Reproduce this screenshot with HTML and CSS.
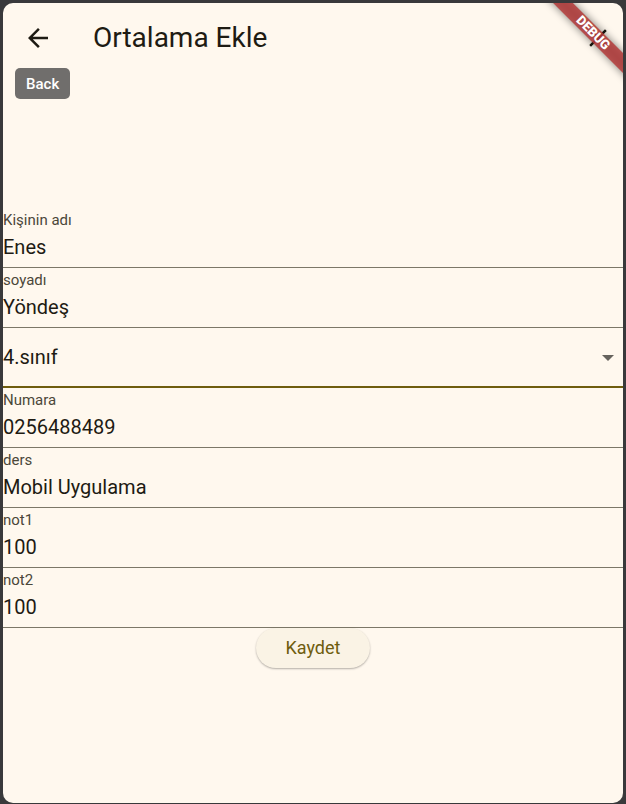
FILE: index.html
```html
<!DOCTYPE html>
<html lang="tr">
<head>
<meta charset="utf-8">
<meta name="viewport" content="width=device-width, initial-scale=1">
<title>Ortalama Ekle</title>
<link rel="stylesheet" href="styles.css">
</head>
<body>
<div class="window">
  <header class="appbar">
    <button class="icon-button" type="button" aria-label="Back">
      <svg class="icon" viewBox="0 0 24 24"><path d="M20 11H7.83l5.59-5.59L12 4l-8 8 8 8 1.41-1.41L7.83 13H20v-2z"/></svg>
    </button>
    <span class="tooltip">Back</span>
    <h1 class="title">Ortalama Ekle</h1>
    <button class="icon-button" type="button" aria-label="Kapat">
      <svg class="icon" viewBox="0 0 24 24"><path d="M19 6.41L17.59 5 12 10.59 6.41 5 5 6.41 10.59 12 5 17.59 6.41 19 12 13.41 17.59 19 19 17.59 13.41 12z"/></svg>
    </button>
  </header>
  <form class="form">
    <div class="field">
      <label class="label" for="ad">Kişinin adı</label>
      <input class="input" id="ad" type="text" value="Enes">
    </div>
    <div class="field">
      <label class="label" for="soyad">soyadı</label>
      <input class="input" id="soyad" type="text" value="Yöndeş">
    </div>
    <div class="field field-select">
      <select class="select" id="sinif" aria-label="Sınıf">
        <option>4.sınıf</option>
      </select>
      <svg class="caret" viewBox="0 0 12 6"><path d="M0 0h12L6 6z"/></svg>
    </div>
    <div class="field">
      <label class="label" for="numara">Numara</label>
      <input class="input" id="numara" type="text" value="0256488489">
    </div>
    <div class="field">
      <label class="label" for="ders">ders</label>
      <input class="input" id="ders" type="text" value="Mobil Uygulama">
    </div>
    <div class="field">
      <label class="label" for="not1">not1</label>
      <input class="input" id="not1" type="text" value="100">
    </div>
    <div class="field">
      <label class="label" for="not2">not2</label>
      <input class="input" id="not2" type="text" value="100">
    </div>
    <button class="save" type="button">Kaydet</button>
  </form>
  <div class="ribbon">DEBUG</div>
</div>
</body>
</html>
```
FILE: styles.css
```css
* {
  box-sizing: border-box;
}

body {
  margin: 0;
  padding: 3px 3px 1px;
  min-height: 100vh;
  display: flex;
  background: #39393b;
  font-family: Roboto, "Liberation Sans", sans-serif;
  color: #1e1b13;
}

.window {
  position: relative;
  flex: 1;
  display: flex;
  flex-direction: column;
  overflow: hidden;
  border-radius: 10px;
  background: #fff8ee;
}

.appbar {
  position: relative;
  display: flex;
  align-items: center;
  height: 70px;
  padding: 0 5px;
}

.icon-button {
  display: grid;
  place-items: center;
  width: 60px;
  height: 60px;
  padding: 0;
  border: 0;
  background: none;
  color: inherit;
}

.appbar .icon-button:last-child {
  width: 40px;
}

.icon {
  width: 30px;
  height: 30px;
  fill: currentColor;
}

.title {
  flex: 1;
  margin: 0 0 0 25px;
  font-size: 28px;
  line-height: 36px;
  font-weight: 400;
}

.tooltip {
  position: absolute;
  left: 12px;
  top: 65px;
  padding: 1px 11px 0;
  border-radius: 5px;
  background: #706e6c;
  color: #fff;
  font-size: 15px;
  line-height: 30px;
  font-weight: 500;
}

.form {
  flex: 1;
  display: flex;
  flex-direction: column;
  justify-content: center;
}

.field {
  display: flex;
  flex-direction: column;
  height: 60px;
  padding-top: 2px;
  border-bottom: 1px solid #7c7767;
}

.label {
  color: #4b4739;
  font-size: 15px;
  line-height: 20px;
}

.input,
.select {
  width: 100%;
  padding: 0;
  border: 0;
  outline: 0;
  background: none;
  color: inherit;
  font-family: inherit;
  font-size: 20px;
}

.input {
  height: 34px;
}

.field-select {
  position: relative;
  padding: 0;
  border-bottom: 2px solid #6f5d0e;
}

.select {
  flex: 1;
  appearance: none;
}

.caret {
  position: absolute;
  right: 9px;
  top: 27px;
  width: 12px;
  height: 6px;
  fill: #66635d;
  pointer-events: none;
}

.save {
  align-self: center;
  height: 40px;
  padding: 0 30px 2px;
  border: 0;
  border-radius: 20px;
  background: #faf3e5;
  box-shadow: 0 1px 2px rgba(0, 0, 0, 0.3);
  color: #6f5d0e;
  font-family: inherit;
  font-size: 18px;
  font-weight: 400;
}

.ribbon {
  position: absolute;
  top: 23px;
  right: -30px;
  width: 120px;
  height: 14px;
  transform: rotate(45deg);
  color: #fff;
  font-size: 13px;
  line-height: 14px;
  font-weight: 900;
  text-align: center;
  pointer-events: none;
}

.ribbon::before,
.ribbon::after {
  content: "";
  position: absolute;
  z-index: -1;
  inset: 0;
}

.ribbon::before {
  background: rgba(0, 0, 0, 0.5);
  filter: blur(4px);
}

.ribbon::after {
  background: rgba(180, 59, 59, 0.85);
}
```
